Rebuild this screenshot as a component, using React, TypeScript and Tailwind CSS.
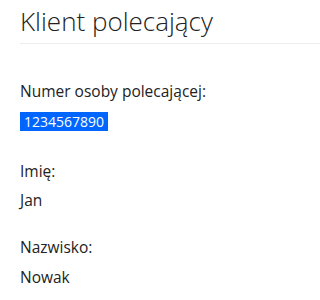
export default function App() {
  return (
    <div className="min-h-[300px] bg-white pl-5 text-[#222] [font-family:'Open_Sans',sans-serif]">
      <h1 className="border-b border-[#eeeeee] pt-[5px] pb-[6px] text-[26px] font-light leading-[32px]">
        Klient polecający
      </h1>
      <dl className="pt-[37px] text-[15.5px] leading-[20px]">
        <dt>Numer osoby polecającej:</dt>
        <dd className="mt-[10px]">
          <span className="inline-block h-[19px] bg-[#0066ff] px-[4px] text-[14px] leading-[19px] text-white">
            1234567890
          </span>
        </dd>
        <dt className="mt-[30px]">Imię:</dt>
        <dd className="mt-[9px]">Jan</dd>
        <dt className="mt-[27px]">Nazwisko:</dt>
        <dd className="mt-[10px]">Nowak</dd>
      </dl>
    </div>
  );
}
